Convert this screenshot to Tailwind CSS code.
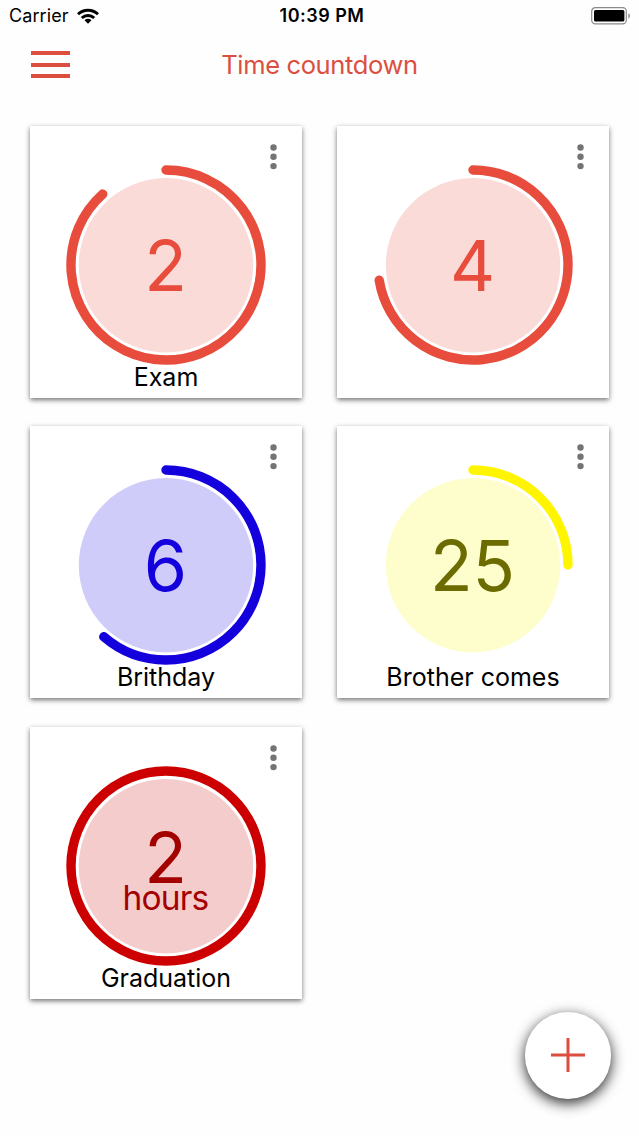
<!DOCTYPE html>
<html lang="en">

<head>
    <meta charset="UTF-8">
    <title>Time countdown</title>
    <script src="https://cdn.jsdelivr.net/npm/@tailwindcss/browser@4"></script>
</head>

<body class="bg-[#fefefe] h-[1136px] overflow-hidden font-['Inter','Liberation_Sans',sans-serif] text-black">

    <!-- Status bar -->
    <div class="grid grid-cols-3 items-center h-8 pl-[9px] pr-2">
        <div class="flex items-center gap-2">
            <span class="text-[18px] leading-8 tracking-[0.1px]">Carrier</span>
            <svg class="w-[22px] h-4" viewBox="0 0 22 16">
                <g fill="none" stroke="#000" stroke-width="3">
                    <path d="M1 6.3a14.2 14.2 0 0 1 20 0" />
                    <path d="M4.8 10a8.8 8.8 0 0 1 12.4 0" />
                </g>
                <path d="M11 15.7L7.5 12.2a5 5 0 0 1 7 0z" />
            </svg>
        </div>
        <span class="text-center text-[18px] leading-8 pl-1 font-semibold whitespace-nowrap tracking-[0.5px]">10:39 PM</span>
        <svg class="justify-self-end w-10 h-[18px]" viewBox="0 0 40 18">
            <rect x="0.7" y="0.7" width="34.6" height="16.2" rx="3.6" fill="none" stroke="#8a8a8a" stroke-width="1.2" />
            <rect x="3" y="3" width="30.4" height="11.6" rx="1.6" />
            <path d="M37.4 6.2c2 .8 2 4.6 0 5.4z" fill="#8a8a8a" />
        </svg>
    </div>

    <!-- Title bar -->
    <header class="grid grid-cols-[1fr_auto_1fr] items-center h-[66px] px-[31px] text-[#dc4f40]">
        <button class="flex flex-col justify-between w-[39px] h-[27px] -mt-px">
            <span class="h-1 w-full bg-[#dc4f40]"></span>
            <span class="h-1 w-full bg-[#dc4f40]"></span>
            <span class="h-1 w-full bg-[#dc4f40]"></span>
        </button>
        <h1 class="text-[25.5px] tracking-[-0.35px] pt-px">Time countdown</h1>
    </header>

    <!-- Countdown cards -->
    <main class="grid grid-cols-[272px_272px] gap-x-[35px] gap-y-[28.9px] pl-[30px] pt-[27.5px]">

        <div class="relative h-[272px] bg-white shadow-[0_2px_5px_rgba(0,0,0,0.55)] pt-[39px] flex flex-col items-center">
            <button class="absolute right-[25px] top-[18px]">
                <svg class="w-[7px] h-[26px]" viewBox="0 0 7 26" fill="#747474">
                    <circle cx="3.5" cy="3.5" r="3.2" />
                    <circle cx="3.5" cy="12.8" r="3.2" />
                    <circle cx="3.5" cy="22.1" r="3.2" />
                </svg>
            </button>
            <svg class="size-[200px] shrink-0" viewBox="0 0 200 200">
                <circle cx="100" cy="100.3" r="87.2" fill="#fadbd8" />
                <path d="M100 5A95 95 0 1 1 36.8 29.07" fill="none" stroke="#e74c3c" stroke-width="9.4" stroke-linecap="round" />
                <text x="99.5" y="125.5" text-anchor="middle" font-size="70" fill="#e74c3c">2</text>
            </svg>
            <p class="-mt-0.5 text-[25px] leading-7">Exam</p>
        </div>

        <div class="relative h-[272px] bg-white shadow-[0_2px_5px_rgba(0,0,0,0.55)] pt-[39px] flex flex-col items-center">
            <button class="absolute right-[25px] top-[18px]">
                <svg class="w-[7px] h-[26px]" viewBox="0 0 7 26" fill="#747474">
                    <circle cx="3.5" cy="3.5" r="3.2" />
                    <circle cx="3.5" cy="12.8" r="3.2" />
                    <circle cx="3.5" cy="22.1" r="3.2" />
                </svg>
            </button>
            <svg class="size-[200px] shrink-0" viewBox="0 0 200 200">
                <circle cx="100" cy="100.3" r="87.2" fill="#fadbd8" />
                <path d="M100 5A95 95 0 1 1 6.22 115.19" fill="none" stroke="#e74c3c" stroke-width="9.4" stroke-linecap="round" />
                <text x="99.5" y="125.5" text-anchor="middle" font-size="70" fill="#e74c3c">4</text>
            </svg>
        </div>

        <div class="relative h-[272px] bg-white shadow-[0_2px_5px_rgba(0,0,0,0.55)] pt-[39px] flex flex-col items-center">
            <button class="absolute right-[25px] top-[18px]">
                <svg class="w-[7px] h-[26px]" viewBox="0 0 7 26" fill="#747474">
                    <circle cx="3.5" cy="3.5" r="3.2" />
                    <circle cx="3.5" cy="12.8" r="3.2" />
                    <circle cx="3.5" cy="22.1" r="3.2" />
                </svg>
            </button>
            <svg class="size-[200px] shrink-0" viewBox="0 0 200 200">
                <circle cx="100" cy="100.3" r="87.2" fill="#cfccfa" />
                <path d="M100 5A95 95 0 0 1 100 195A95 95 0 0 1 37.8 171.81" fill="none" stroke="#1400dc" stroke-width="9.4" stroke-linecap="round" />
                <text x="99.5" y="125.5" text-anchor="middle" font-size="70" fill="#1400dc">6</text>
            </svg>
            <p class="-mt-0.5 text-[25px] leading-7">Brithday</p>
        </div>

        <div class="relative h-[272px] bg-white shadow-[0_2px_5px_rgba(0,0,0,0.55)] pt-[39px] flex flex-col items-center">
            <button class="absolute right-[25px] top-[18px]">
                <svg class="w-[7px] h-[26px]" viewBox="0 0 7 26" fill="#747474">
                    <circle cx="3.5" cy="3.5" r="3.2" />
                    <circle cx="3.5" cy="12.8" r="3.2" />
                    <circle cx="3.5" cy="22.1" r="3.2" />
                </svg>
            </button>
            <svg class="size-[200px] shrink-0" viewBox="0 0 200 200">
                <circle cx="100" cy="100.3" r="87.2" fill="#fefecd" />
                <path d="M100 5A95 95 0 0 1 195 100" fill="none" stroke="#fff500" stroke-width="9.4" stroke-linecap="round" />
                <text x="99.5" y="125.5" text-anchor="middle" font-size="70" fill="#6b6b00">25</text>
            </svg>
            <p class="-mt-0.5 text-[25px] leading-7">Brother comes</p>
        </div>

        <div class="relative h-[272px] bg-white shadow-[0_2px_5px_rgba(0,0,0,0.55)] pt-[39px] flex flex-col items-center">
            <button class="absolute right-[25px] top-[18px]">
                <svg class="w-[7px] h-[26px]" viewBox="0 0 7 26" fill="#747474">
                    <circle cx="3.5" cy="3.5" r="3.2" />
                    <circle cx="3.5" cy="12.8" r="3.2" />
                    <circle cx="3.5" cy="22.1" r="3.2" />
                </svg>
            </button>
            <svg class="size-[200px] shrink-0" viewBox="0 0 200 200">
                <circle cx="100" cy="100.3" r="87.2" fill="#f5cccc" />
                <circle cx="100" cy="100" r="95" fill="none" stroke="#cc0000" stroke-width="9.4" />
                <text x="99.5" y="116.500" text-anchor="middle" font-size="70" fill="#a30000">2</text>
                <text x="99.5" y="144" text-anchor="middle" font-size="33.5" letter-spacing="-0.8" fill="#a30000">hours</text>
            </svg>
            <p class="-mt-0.5 text-[25px] leading-7">Graduation</p>
        </div>
    </main>

    <!-- Add button -->
    <button class="absolute left-[524.5px] top-[1012px] size-[86.5px] rounded-full bg-white shadow-[0_4px_14px_rgba(0,0,0,0.85)] flex items-center justify-center">
        <svg class="size-[34px]" viewBox="0 0 34 34" fill="none" stroke="#dc4f40" stroke-width="3">
            <path d="M17 0v34M0 17h34" />
        </svg>
    </button>
</body>

</html>
